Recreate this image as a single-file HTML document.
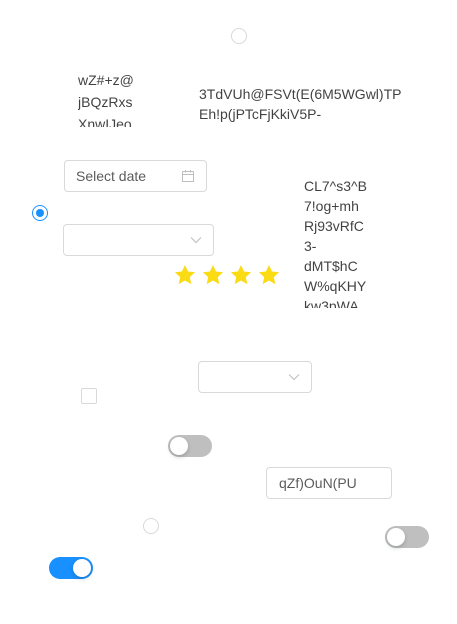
<!DOCTYPE html>
<html><head><style>
*{box-sizing:border-box;margin:0;padding:0}
body{width:457px;height:624px;background:#fff;position:relative;overflow:hidden;font-family:"Liberation Sans",sans-serif;font-size:14px;color:rgba(0,0,0,.75)}
.a{position:absolute}
.radio{position:absolute;width:16px;height:16px;border:1px solid #d9d9d9;border-radius:50%;background:#fff}
.box{position:absolute;border:1px solid #d9d9d9;border-radius:4px;background:#fff}
.sw{position:absolute;width:44px;height:22px;border-radius:11px;background:#bfbfbf}
.sw i{position:absolute;top:2px;left:2px;width:18px;height:18px;border-radius:50%;background:#fff;box-shadow:0 2px 4px rgba(0,35,11,.2)}
.txt{position:absolute;overflow:hidden;white-space:pre}
</style></head><body>
<div class="radio" style="left:231px;top:28px"></div>
<div class="txt" style="left:78px;top:69px;width:80px;height:58px;line-height:22px">wZ#+z@
jBQzRxs
XnwIJeo</div>
<div class="txt" style="left:199px;top:84px;width:215px;height:47px;line-height:20px">3TdVUh@FSVt(E(6M5WGwl)TP
Eh!p(jPTcFjKkiV5P-
aaaaaaaaaaaaaaaaaaaaa</div>
<div class="box" style="left:64px;top:160px;width:143px;height:32px"><span class="a" style="left:11px;top:7px;color:rgba(0,0,0,.65)">Select date</span>
<svg class="a" style="left:116px;top:8px" width="14" height="14" viewBox="0 0 14 14" fill="none" stroke="#bfbfbf" stroke-width="1"><rect x="1.5" y="2.5" width="11" height="10"/><line x1="1.5" y1="5.5" x2="12.5" y2="5.5"/><line x1="4.5" y1="1" x2="4.5" y2="3.5"/><line x1="9.5" y1="1" x2="9.5" y2="3.5"/></svg></div>
<div class="radio" style="left:32px;top:205px;border-color:#1890ff"><div class="a" style="left:3px;top:3px;width:8px;height:8px;border-radius:50%;background:#1890ff"></div></div>
<div class="box" style="left:63px;top:224px;width:151px;height:32px"><svg class="a" style="left:126px;top:10px" width="12" height="10" viewBox="0 0 12 10"><path d="M1 2.5l5 5 5-5" fill="none" stroke="#bfbfbf" stroke-width="1.1"/></svg></div>
<svg class="a" style="left:174px;top:264px" width="108" height="24" viewBox="0 0 108 24" fill="#fadb14">
<g id="s"><path d="M11 1l3 6.5 7 .8-5.2 4.8 1.5 7-6.3-3.6-6.3 3.6 1.5-7L.9 8.3l7-.8z"/></g>
<use href="#s" x="28"/><use href="#s" x="56"/><use href="#s" x="84"/></svg>
<div class="txt" style="left:304px;top:176px;width:70px;height:132px;line-height:20px">CL7^s3^B
7!og+mh
Rj93vRfC
3-
dMT$hC
W%qKHY
kw3pWA</div>
<div class="box" style="left:198px;top:361px;width:114px;height:32px"><svg class="a" style="left:89px;top:10px" width="12" height="10" viewBox="0 0 12 10"><path d="M1 2.5l5 5 5-5" fill="none" stroke="#bfbfbf" stroke-width="1.1"/></svg></div>
<div class="box" style="left:81px;top:388px;width:16px;height:16px;border-radius:2px"></div>
<div class="sw" style="left:168px;top:435px"><i></i></div>
<div class="box" style="left:266px;top:467px;width:126px;height:32px"><span class="a" style="left:12px;top:7px;color:rgba(0,0,0,.65)">qZf)OuN(PU</span></div>
<div class="radio" style="left:143px;top:518px"></div>
<div class="sw" style="left:385px;top:526px"><i></i></div>
<div class="sw" style="left:49px;top:557px;background:#1890ff"><i style="left:24px"></i></div>
</body></html>
